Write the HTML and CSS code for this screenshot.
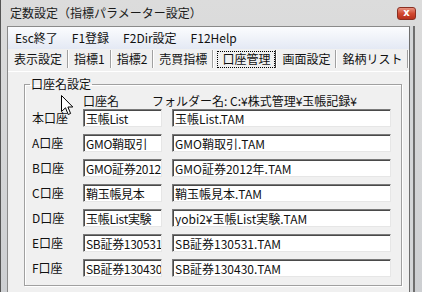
FILE: index.html
```html
<!DOCTYPE html>
<html lang="ja">
<head>
  <meta charset="UTF-8">
  <title>定数設定（指標パラメーター設定）</title>
  <link rel="stylesheet" href="styles.css">
</head>
<body>

<div id="window">
  <div class="titlebar">
    <span class="title">定数設定（指標パラメーター設定）</span>
    <span class="close-btn">x</span>
  </div>

  <div class="client">
    <div class="menubar">
      <span class="menu-item">Esc終了</span>
      <span class="menu-item">F1登録</span>
      <span class="menu-item">F2Dir設定</span>
      <span class="menu-item">F12Help</span>
    </div>

    <div class="tabs">
      <span class="tab">表示設定</span>
      <span class="tab">指標1</span>
      <span class="tab">指標2</span>
      <span class="tab">売買指標</span>
      <span class="tab selected"><span class="focus">口座管理</span></span>
      <span class="tab">画面設定</span>
      <span class="tab">銘柄リスト</span>
    </div>

    <div class="page">
      <fieldset class="group">
        <legend>口座名設定</legend>
        <div class="head">
          <span class="head-name">口座名</span>
          <span class="head-folder">フォルダー名: C:¥株式管理¥玉帳記録¥</span>
        </div>
        <div class="row">
          <span class="label">本口座</span>
          <div class="field name">玉帳List</div>
          <div class="field path">玉帳List.TAM</div>
        </div>
        <div class="row">
          <span class="label">A口座</span>
          <div class="field name">GMO鞘取引</div>
          <div class="field path">GMO鞘取引.TAM</div>
        </div>
        <div class="row">
          <span class="label">B口座</span>
          <div class="field name">GMO証券2012年</div>
          <div class="field path">GMO証券2012年.TAM</div>
        </div>
        <div class="row">
          <span class="label">C口座</span>
          <div class="field name">鞘玉帳見本</div>
          <div class="field path">鞘玉帳見本.TAM</div>
        </div>
        <div class="row">
          <span class="label">D口座</span>
          <div class="field name">玉帳List実験</div>
          <div class="field path">yobi2¥玉帳List実験.TAM</div>
        </div>
        <div class="row">
          <span class="label">E口座</span>
          <div class="field name">SB証券130531</div>
          <div class="field path">SB証券130531.TAM</div>
        </div>
        <div class="row">
          <span class="label">F口座</span>
          <div class="field name">SB証券130430</div>
          <div class="field path">SB証券130430.TAM</div>
        </div>
      </fieldset>
    </div>
  </div>
</div>

<!-- mouse pointer sitting over the group box -->
<svg class="cursor" width="13" height="21" viewBox="0 0 13 21">
  <path d="M0.5 0.5 L0.5 16.5 L4.5 12.8 L7.2 19.5 L9.6 18.5 L6.9 12 L11.8 12 Z" fill="#fff" stroke="#000" stroke-width="1"/>
</svg>

</body>
</html>
```

FILE: styles.css
```css
body {
  margin: 0;
  width: 422px;
  height: 292px;
  overflow: hidden;
  position: relative;
  font-family: "Noto Sans CJK JP", "Liberation Sans", sans-serif;
  font-size: 12px;
  color: #111;
  background: #cfd1d4;
}

#window {
  display: flex;
  flex-direction: column;
  height: 100%;
  box-sizing: border-box;
  border-left: 1px solid #555;
  background: linear-gradient(to bottom, #dcdcdc, #cdcfd2);
}

.titlebar {
  display: flex;
  align-items: center;
  flex: none;
  height: 26px;
  padding: 0 6px 0 9px;
}

.title {
  color: #1a1a1a;
  line-height: 14px;
}

.close-btn {
  margin-left: auto;
  width: 19px;
  height: 13px;
  box-sizing: border-box;
  border: 1px solid #8a2f22;
  border-radius: 3px;
  background: linear-gradient(to bottom, #e7917f, #d24a32 50%, #b8301c);
  color: #fff;
  font-family: "DejaVu Sans", sans-serif;
  font-weight: bold;
  font-size: 10px;
  line-height: 10px;
  text-align: center;
}

.client {
  flex: 1;
  min-height: 0;
  margin: 0 12px 0 6px;
  border-top: 1px solid #8a8a8a;
  border-left: 1px solid #8a8a8a;
  border-right: 1px solid #6e6e6e;
  background: #f0f0f0;
  box-shadow: 3px 0 0 #d4d6d8, 5px 0 0 #6e6e6e;
}

.menubar {
  display: flex;
  align-items: center;
  height: 22px;
  background: linear-gradient(to bottom, #fbfcfe, #e4e9f4);
}

.menu-item {
  padding: 0 7px;
  line-height: 14px;
}

.tabs {
  display: flex;
  height: 23px;
  border-bottom: 1px solid #fff;
  box-sizing: border-box;
}

.tab {
  display: flex;
  align-items: center;
  margin: 1px 0 3px;
  padding: 0 5px 0 6px;
  border-right: 1px solid #a0a0a0;
  box-shadow: 1px 0 0 #fff;
  line-height: 14px;
}

.tab.selected {
  padding: 0 1px 0 5px;
  border-right: 1px solid #404040;
}

.focus {
  padding: 0 4px;
  height: 15px;
  outline: 1px dotted #000;
}

.page {
  padding: 5px 0 0 16px;
}

.group {
  width: 378px;
  margin: 0;
  padding: 3px 0 8px 7px;
  box-sizing: border-box;
  border: 1px solid #a0a0a0;
  box-shadow: inset 1px 1px 0 #fff, 1px 1px 0 #fff;
}

.group legend {
  margin-left: -2px;
  padding: 0 1px;
  line-height: 14px;
}

.head {
  display: flex;
  height: 14px;
  line-height: 14px;
  margin-bottom: 1px;
}

.head-name {
  margin-left: 51px;
}

.head-folder {
  margin-left: 33px;
}

.row {
  display: flex;
  align-items: center;
  height: 18px;
  margin-bottom: 7px;
}

.row:last-child {
  margin-bottom: 0;
}

.label {
  width: 51px;
  line-height: 14px;
}

.field {
  height: 18px;
  box-sizing: border-box;
  padding: 1px 2px;
  border: 1px solid;
  border-color: #7a7a7a #e6e6e6 #e6e6e6 #7a7a7a;
  box-shadow: inset 1px 1px 0 #4a4a4a;
  background: #fff;
  line-height: 15px;
  white-space: nowrap;
  overflow: hidden;
}

.field.name {
  width: 79px;
  letter-spacing: -0.3px;
}

.field.path {
  width: 219px;
  margin-left: 10px;
}

.cursor {
  position: absolute;
  left: 61px;
  top: 95px;
}
```
